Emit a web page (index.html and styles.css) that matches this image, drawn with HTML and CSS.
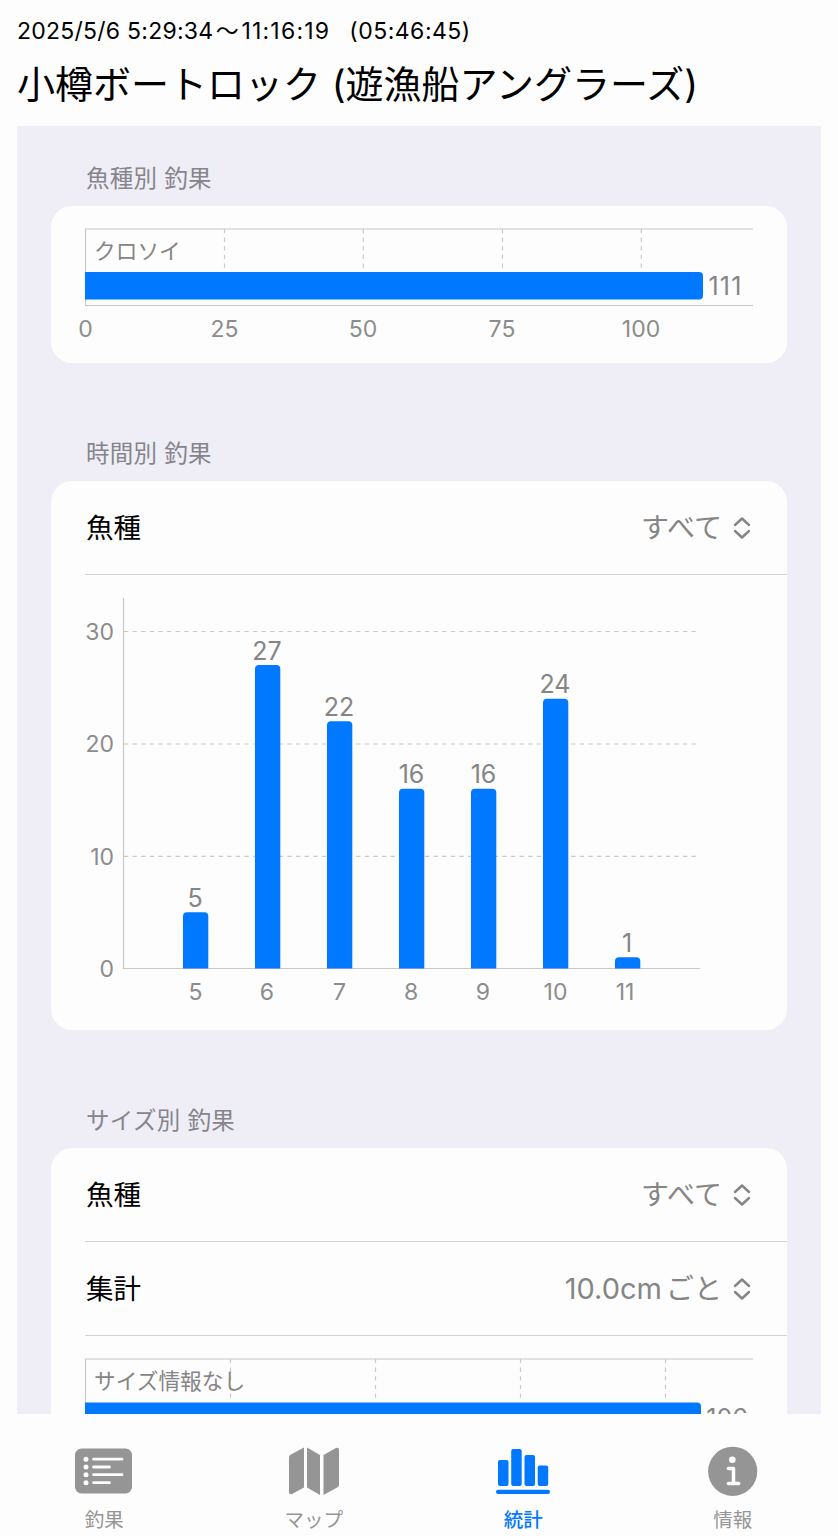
FILE: index.html
```html
<!DOCTYPE html>
<html lang="ja">
<head>
    <meta charset="UTF-8">
    <meta name="viewport" content="width=device-width, initial-scale=1.0">
    <title>小樽ボートロック</title>
    <link rel="stylesheet" href="styles.css">
</head>
<body>
    <header class="header">
        <div class="time"><span>2025/5/6 5:29:34</span><span class="wave">～</span><span class="end">11:16:19</span><span class="duration">(05:46:45)</span></div>
        <h1>小樽ボートロック (遊漁船アングラーズ)</h1>
    </header>

    <main class="content">
        <section>
            <h2>魚種別 釣果</h2>
            <div class="card">
                <svg class="chart" width="736" height="157" viewBox="0 0 736 157">
                    <path class="grid" d="M173.5 23V66M312.3 23V66M451.5 23V66M590.3 23V66"/>
                    <path class="axis" d="M702 23H34.5V99.5H702"/>
                    <text class="name" x="43" y="53">クロソイ</text>
                    <path class="bar" d="M34 66H648a4 4 0 0 1 4 4V89.5a4 4 0 0 1-4 4H34z"/>
                    <text class="value wide" x="674.5" y="89">111</text>
                    <g class="tick">
                        <text x="34.5" y="130.5">0</text>
                        <text x="173.5" y="130.5">25</text>
                        <text x="312" y="130.5">50</text>
                        <text x="451" y="130.5">75</text>
                        <text x="590" y="130.5">100</text>
                    </g>
                </svg>
            </div>
        </section>

        <section>
            <h2>時間別 釣果</h2>
            <div class="card">
                <div class="row">
                    <span class="label">魚種</span>
                    <span class="select"><span class="kana">すべて</span>
                        <svg class="updown" width="18" height="24" viewBox="0 0 18 24"><path d="M2 9 9 2.5 16 9M2 15 9 21.5 16 15"/></svg>
                    </span>
                </div>
                <svg class="chart" width="736" height="455" viewBox="0 0 736 455">
                    <path class="grid" d="M73 56.5H649M73 169H649M73 281.3H649"/>
                    <path class="axis" d="M72.5 23V393.5H649"/>
                    <g class="bar">
                        <path d="M132 393.5v-52.2a4 4 0 0 1 4-4h17.3a4 4 0 0 1 4 4v52.2z"/>
                        <path d="M204 393.5v-299.5a4 4 0 0 1 4-4h17.3a4 4 0 0 1 4 4v299.5z"/>
                        <path d="M276 393.5v-243.3a4 4 0 0 1 4-4h17.3a4 4 0 0 1 4 4v243.3z"/>
                        <path d="M348 393.5v-175.8a4 4 0 0 1 4-4h17.3a4 4 0 0 1 4 4v175.8z"/>
                        <path d="M420 393.5v-175.8a4 4 0 0 1 4-4h17.3a4 4 0 0 1 4 4v175.8z"/>
                        <path d="M492 393.5v-265.8a4 4 0 0 1 4-4h17.3a4 4 0 0 1 4 4v265.8z"/>
                        <path d="M564 393.5v-7.2a4 4 0 0 1 4-4h17.3a4 4 0 0 1 4 4v7.2z"/>
                    </g>
                    <g class="value">
                        <text x="144" y="332">5</text>
                        <text x="216" y="84.5">27</text>
                        <text x="288" y="140.5">22</text>
                        <text x="360.5" y="208">16</text>
                        <text x="432.5" y="208">16</text>
                        <text x="504" y="117.5">24</text>
                        <text x="576" y="376.5">1</text>
                    </g>
                    <g class="tick tick-y">
                        <text x="63" y="65">30</text>
                        <text x="63" y="177">20</text>
                        <text x="63" y="289.5">10</text>
                        <text x="63" y="402">0</text>
                    </g>
                    <g class="tick">
                        <text x="144.5" y="425">5</text>
                        <text x="216" y="425">6</text>
                        <text x="288.5" y="425">7</text>
                        <text x="360" y="425">8</text>
                        <text x="432" y="425">9</text>
                        <text x="504.5" y="425">10</text>
                        <text x="574" y="425">11</text>
                    </g>
                </svg>
            </div>
        </section>

        <section>
            <h2>サイズ別 釣果</h2>
            <div class="card">
                <div class="row">
                    <span class="label">魚種</span>
                    <span class="select"><span class="kana">すべて</span>
                        <svg class="updown" width="18" height="24" viewBox="0 0 18 24"><path d="M2 9 9 2.5 16 9M2 15 9 21.5 16 15"/></svg>
                    </span>
                </div>
                <div class="row">
                    <span class="label">集計</span>
                    <span class="select"><span class="unit">10.0cm</span><span class="kana">ごと</span>
                        <svg class="updown" width="18" height="24" viewBox="0 0 18 24"><path d="M2 9 9 2.5 16 9M2 15 9 21.5 16 15"/></svg>
                    </span>
                </div>
                <svg class="chart" width="736" height="157" viewBox="0 0 736 157">
                    <path class="grid" d="M179.5 23V66M324.5 23V66M469.5 23V66M614.5 23V66"/>
                    <path class="axis" d="M702 23H34.5V99.5H702"/>
                    <text class="name" x="43" y="53">サイズ情報なし</text>
                    <path class="bar" d="M34 66.5H646a4 4 0 0 1 4 4V90a4 4 0 0 1-4 4H34z"/>
                    <text class="value" x="676" y="91">106</text>
                </svg>
            </div>
        </section>
    </main>

    <nav class="tabs">
        <a class="tab">
            <svg width="58" height="50" viewBox="0 0 58 50">
                <rect x="0" y="2.5" width="57" height="45" rx="6.5" fill="currentColor"/>
                <path class="cut" d="M18.5 13.2H47M18.5 21H34.5M18.5 28.7H47M18.5 36.7H34.5"/>
                <g class="dot"><circle cx="11" cy="13.2" r="2.5"/><circle cx="11" cy="21" r="2.5"/><circle cx="11" cy="28.7" r="2.5"/><circle cx="11" cy="36.7" r="2.5"/></g>
            </svg>
            <span>釣果</span>
        </a>
        <a class="tab">
            <svg width="58" height="50" viewBox="0 0 58 50" fill="currentColor">
                <path d="M19 1.500V41.500L7 48Q4 49 4 46V11Q4 9.500 5.500 8.700z"/>
                <path d="M22 1.500 35 9V49L22 41.500z"/>
                <path d="M38.500 9 51 2Q54 1 54 4V39Q54 40.500 52.500 41.300L38.500 49z"/>
            </svg>
            <span>マップ</span>
        </a>
        <a class="tab active">
            <svg width="58" height="50" viewBox="0 0 58 50" fill="currentColor">
                <rect x="4" y="14" width="10.5" height="26" rx="2"/>
                <rect x="17.2" y="3" width="10.5" height="37" rx="2"/>
                <rect x="30.5" y="9" width="10.5" height="31" rx="2"/>
                <rect x="43.7" y="19.5" width="10.5" height="20.5" rx="2"/>
                <rect x="2" y="43.7" width="54" height="4.3" rx="2.1"/>
            </svg>
            <span>統計</span>
        </a>
        <a class="tab">
            <svg width="58" height="50" viewBox="0 0 58 50">
                <circle cx="28.7" cy="25.3" r="24.6" fill="currentColor"/>
                <circle class="dot" cx="28.3" cy="13.8" r="3.3"/>
                <path class="cut info" d="M24.3 22.5H29.5V37M24.3 37.5H34.7"/>
            </svg>
            <span>情報</span>
        </a>
    </nav>
</body>
</html>
```

FILE: styles.css
```css
* {
    box-sizing: border-box;
}
body {
    margin: 0;
    height: 1536px;
    display: flex;
    flex-direction: column;
    overflow: hidden;
    background-color: #fdfdfd;
    color: #000;
    font-family: Inter, "Noto Sans CJK JP", sans-serif;
}
.header {
    height: 126px;
    padding: 16px 17px 0;
    white-space: nowrap;
}
.time {
    display: flex;
    height: 30px;
    line-height: 30px;
    font-size: 23px;
    letter-spacing: 0.25px;
}
.wave {
    width: 28px;
    text-align: center;
}
.end {
    letter-spacing: 1.2px;
}
.duration {
    margin-left: 19px;
    letter-spacing: 0.5px;
}
h1 {
    margin: 10px 0 0;
    font-size: 38px;
    font-weight: 400;
    line-height: 57px;
}
.content {
    height: 1288px;
    margin: 0 17px;
    padding: 0 34px;
    overflow: hidden;
    background-color: #efeef6;
}
section {
    margin-bottom: 38px;
}
h2 {
    height: 80px;
    margin: 0;
    padding: 35px 0 0 35px;
    font-size: 23.5px;
    font-weight: 400;
    line-height: 35px;
    letter-spacing: 0.3px;
    color: #85858b;
}
.card {
    border-radius: 21px;
    overflow: hidden;
    background-color: #fdfdfd;
}
.row {
    display: flex;
    justify-content: space-between;
    align-items: center;
    height: 94px;
    margin-left: 34px;
    padding-right: 36px;
    border-bottom: 1px solid #d2d2d4;
}
.label {
    padding: 0 0 3px 1px;
    font-size: 27.5px;
}
.select {
    display: flex;
    align-items: center;
    font-size: 27.5px;
    color: #858585;
}
.kana {
    padding-bottom: 3px;
    font-size: 28px;
}
.unit {
    margin-right: 4px;
    font-size: 29px;
}
.updown {
    margin-left: 11px;
    fill: none;
    stroke: #858585;
    stroke-width: 2.4;
    stroke-linecap: round;
    stroke-linejoin: round;
}
.chart {
    display: block;
}
.grid {
    fill: none;
    stroke: #c9c9c9;
    stroke-width: 1.2;
    stroke-dasharray: 4.3 4.3;
}
.axis {
    fill: none;
    stroke: #c8c8ca;
    stroke-width: 1.2;
}
.bar {
    fill: #0078ff;
}
.name {
    font-size: 21.7px;
    fill: #858585;
}
.value {
    font-size: 25px;
    text-anchor: middle;
    fill: #858585;
}
.wide {
    letter-spacing: 1.2px;
}
.tick {
    font-size: 23px;
    text-anchor: middle;
    fill: #8c8c8c;
}
.tick-y {
    text-anchor: end;
}
.tabs {
    display: grid;
    grid-template-columns: repeat(4, 1fr);
    height: 122px;
    padding-top: 32px;
}
.tab {
    display: flex;
    flex-direction: column;
    align-items: center;
    font-size: 19.5px;
    line-height: 30px;
    color: #959595;
}
.tab svg {
    margin-right: 1px;
}
.tab span {
    margin-top: 9px;
    margin-right: 1px;
}
.active {
    color: #0078ff;
    font-weight: 500;
}
.cut {
    fill: none;
    stroke: #fdfdfd;
    stroke-width: 2.8;
    stroke-linecap: round;
}
.info {
    stroke-width: 3.5;
    stroke-linejoin: round;
}
.dot {
    fill: #fdfdfd;
}
```
